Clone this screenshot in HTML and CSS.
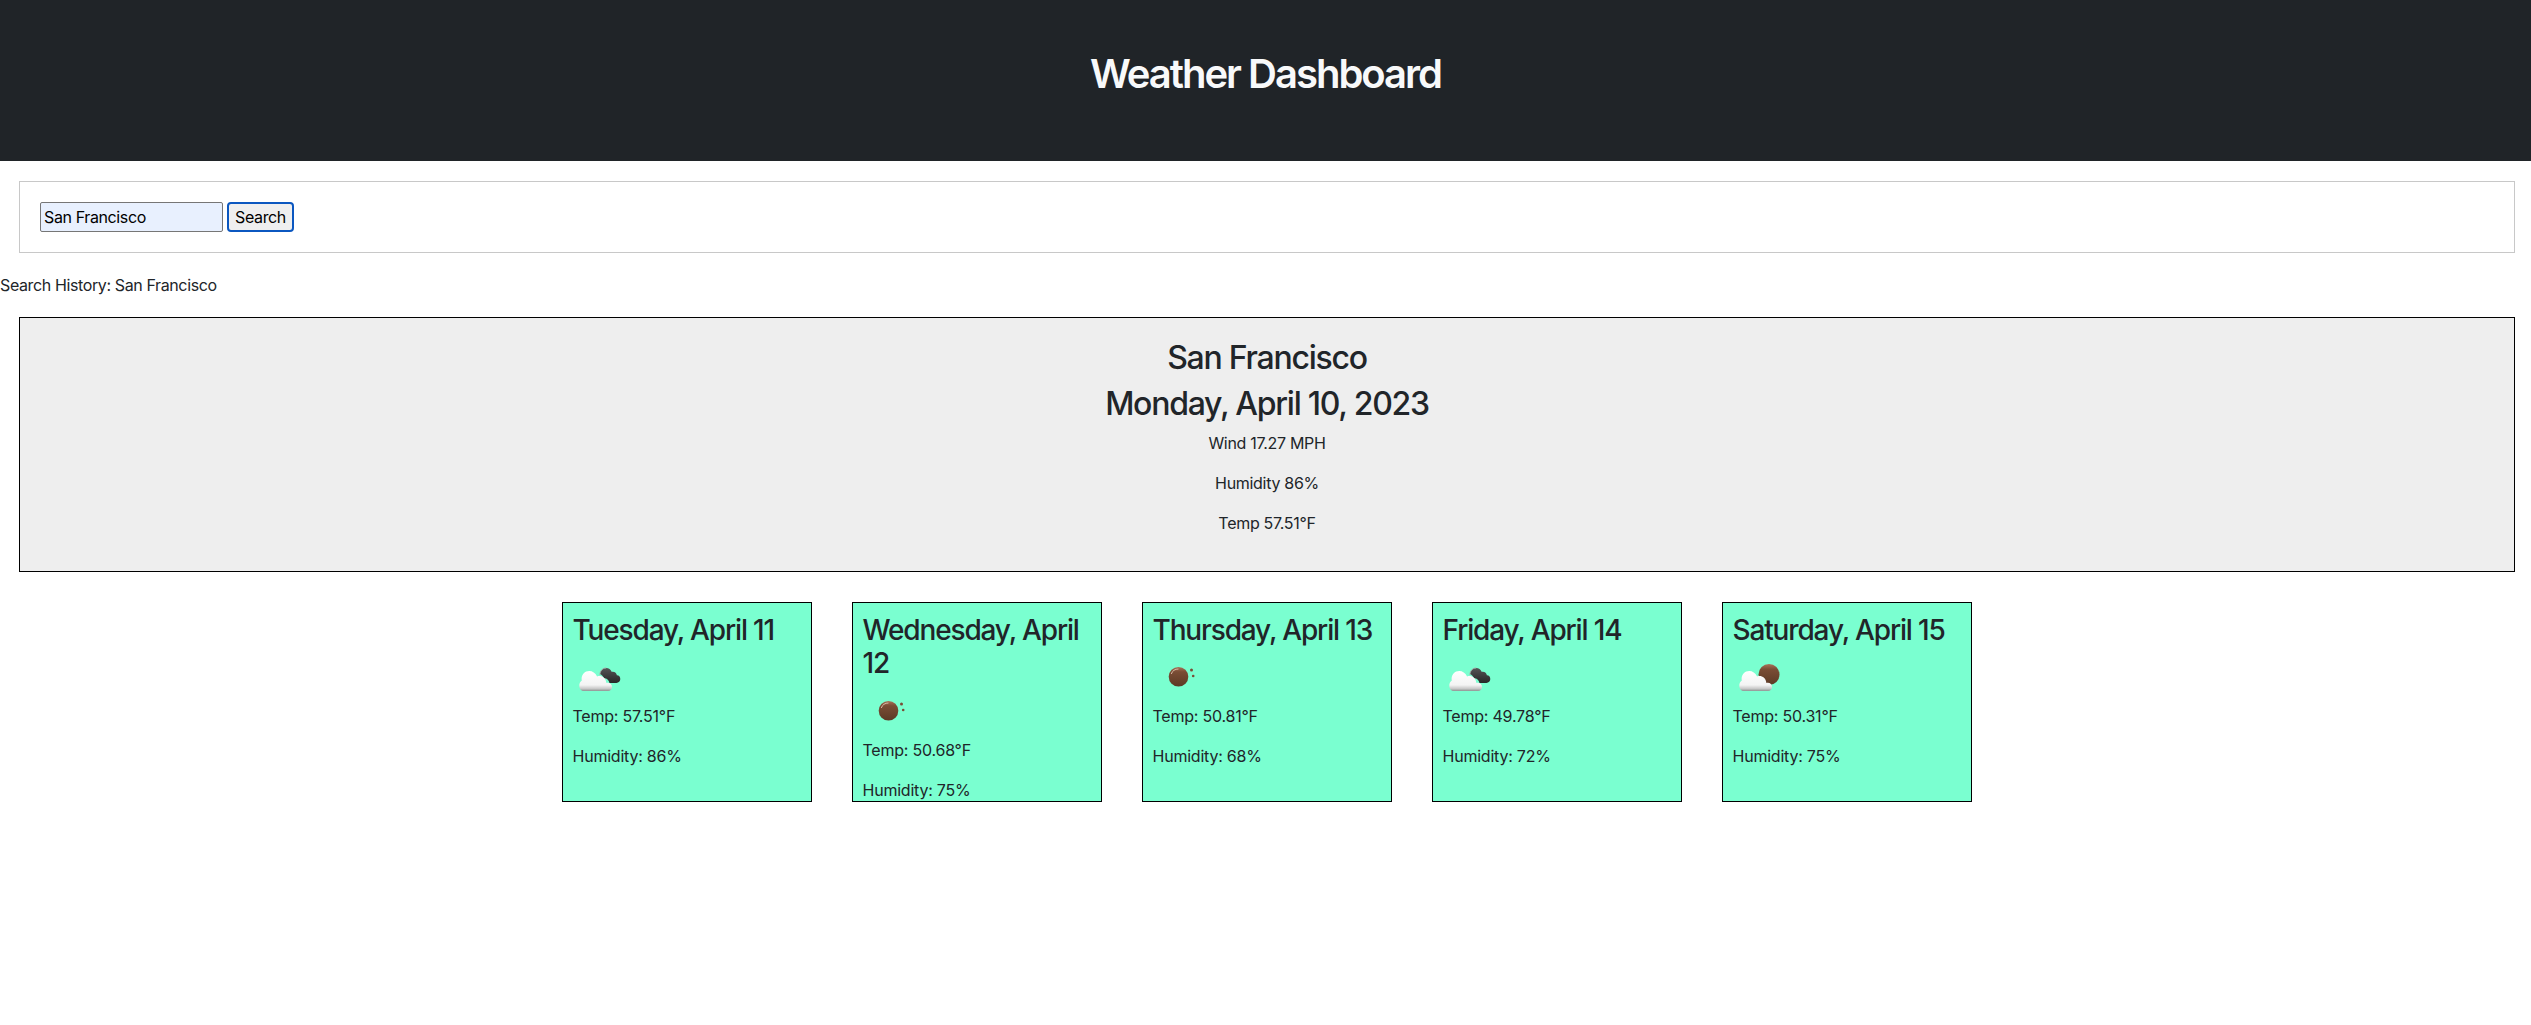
FILE: index.html
```html
<!DOCTYPE html>
<html lang="en">
  <head>
    <meta charset="UTF-8" />
    <meta name="viewport" content="width=device-width, initial-scale=1.0" />
    <title>Weather Dashboard</title>
    <link rel="stylesheet" href="styles.css">
  </head>
  <body>
    <svg class="icon-defs" aria-hidden="true">
      <defs>
        <linearGradient id="gradWhite" x1="0" y1="0" x2="0" y2="1">
          <stop offset="0" stop-color="#ffffff" />
          <stop offset="0.7" stop-color="#f4f4f4" />
          <stop offset="0.88" stop-color="#c9c9c9" />
          <stop offset="1" stop-color="#8f9492" />
        </linearGradient>
        <linearGradient id="gradDark" x1="0" y1="0" x2="0" y2="1">
          <stop offset="0" stop-color="#555555" />
          <stop offset="1" stop-color="#272727" />
        </linearGradient>
        <linearGradient id="gradBrown" x1="0" y1="0" x2="0" y2="1">
          <stop offset="0" stop-color="#a9745a" />
          <stop offset="0.25" stop-color="#7a4d35" />
          <stop offset="1" stop-color="#5c3a25" />
        </linearGradient>
        <symbol id="whiteCloud" viewBox="0 0 50 50">
          <path d="M10 37h24c2.600 0 4-1.800 4-4s-1.600-4.200-4.200-4.200c-.6 0-1 .1-1.400.2C32 24.600 28.800 22 25.400 22c-.8 0-1.600.1-2.300.4C21.400 19 18.400 17 15.300 17c-4.500 0-7.700 3.400-7.700 7.800 0 .6.1 1.200.2 1.600-1.500 1-2.500 2.800-2.500 5C5.300 34.800 7.300 37 10 37z" fill="url(#gradWhite)" />
        </symbol>
        <symbol id="darkCloud" viewBox="0 0 50 50">
          <path d="M26 21c-.2-3.500 2.200-7 6.200-7 2.600 0 4.600 1.500 5.400 3.800 3-.6 5 1.200 5.300 3.500 2-.1 3.400 1.600 3.400 3.800 0 2.300-1.600 3.900-3.900 3.900h-6.900c-.7-3-2.800-5-5.700-4.800-.6-1.900-1.900-3.400-3.800-4.200z" fill="url(#gradDark)" />
          <path d="M26 21c-.2-3.500 2.200-7 6.200-7" fill="none" stroke="#a8a8a8" stroke-width="1" />
        </symbol>
        <symbol id="stars" viewBox="0 0 50 50">
          <circle cx="37.500" cy="16" r="1.500" fill="#7a4d35" />
          <circle cx="39.200" cy="22" r="1.300" fill="#7a4d35" />
        </symbol>
      </defs>
    </svg>

    <header class="page-header">
      <h1>Weather Dashboard</h1>
    </header>

    <form class="search-form">
      <input class="search-input" type="text" value="San Francisco" />
      <button class="search-button" type="button">Search</button>
    </form>

    <p class="search-history">Search History: San Francisco</p>

    <section class="current-weather">
      <h2>San Francisco</h2>
      <h2>Monday, April 10, 2023</h2>
      <p>Wind 17.27 MPH</p>
      <p>Humidity 86%</p>
      <p>Temp 57.51°F</p>
    </section>

    <section class="forecast">
      <div class="card">
        <h3>Tuesday, April 11</h3>
        <svg class="weather-icon" viewBox="0 0 50 50">
          <use href="#darkCloud" />
          <use href="#whiteCloud" />
        </svg>
        <p>Temp: 57.51°F</p>
        <p>Humidity: 86%</p>
      </div>
      <div class="card">
        <h3>Wednesday, April 12</h3>
        <svg class="weather-icon" viewBox="0 0 50 50">
          <circle cx="24.500" cy="22.700" r="9.800" fill="url(#gradBrown)" />
          <path d="M17.300 20c1-3.300 3.800-5 7.200-5" fill="none" stroke="#d9b8a5" stroke-width="1" />
          <use href="#stars" />
        </svg>
        <p>Temp: 50.68°F</p>
        <p>Humidity: 75%</p>
      </div>
      <div class="card">
        <h3>Thursday, April 13</h3>
        <svg class="weather-icon" viewBox="0 0 50 50">
          <circle cx="24.500" cy="22.700" r="9.800" fill="url(#gradBrown)" />
          <path d="M17.300 20c1-3.300 3.800-5 7.200-5" fill="none" stroke="#d9b8a5" stroke-width="1" />
          <use href="#stars" />
        </svg>
        <p>Temp: 50.81°F</p>
        <p>Humidity: 68%</p>
      </div>
      <div class="card">
        <h3>Friday, April 14</h3>
        <svg class="weather-icon" viewBox="0 0 50 50">
          <use href="#darkCloud" />
          <use href="#whiteCloud" />
        </svg>
        <p>Temp: 49.78°F</p>
        <p>Humidity: 72%</p>
      </div>
      <div class="card">
        <h3>Saturday, April 15</h3>
        <svg class="weather-icon" viewBox="0 0 50 50">
          <circle cx="35" cy="20.500" r="10.500" fill="url(#gradBrown)" />
          <use href="#whiteCloud" />
        </svg>
        <p>Temp: 50.31°F</p>
        <p>Humidity: 75%</p>
      </div>
    </section>
  </body>
</html>
```

FILE: styles.css
```css
body {
  font-family: Inter, "Liberation Sans", sans-serif;
  font-size: 16px;
  line-height: 1.5;
  letter-spacing: -0.38px;
  margin: 0;
  background-color: #ffffff;
  color: #212529;
}
h1,
h2,
h3 {
  margin: 0 0 8px;
  font-weight: 500;
  line-height: 1.2;
}
h1 {
  font-size: 40px;
  font-weight: 600;
  letter-spacing: -2px;
  color: #f8f9fa;
}
h2 {
  font-size: 32px;
  letter-spacing: -1.25px;
}
h3 {
  font-size: 28px;
  letter-spacing: -1.15px;
}
p {
  margin: 0 0 16px;
}
.icon-defs {
  position: absolute;
  width: 0;
  height: 0;
}
.page-header {
  height: 161px;
  padding-top: 50px;
  box-sizing: border-box;
  text-align: center;
  background-color: #202428;
}
.search-form {
  display: flex;
  gap: 4px;
  margin: 20px 16px 20px 19px;
  padding: 20px;
  border: 1px solid #c8c8c8;
}
.search-input {
  width: 183px;
  height: 30px;
  padding: 1px 3px;
  box-sizing: border-box;
  font-family: inherit;
  font-size: 16px;
  letter-spacing: -0.38px;
  color: #000000;
  background-color: #e8f0fe;
  border: 1px solid #767676;
  border-radius: 2px;
}
.search-button {
  width: 67px;
  height: 30px;
  padding: 0;
  font-family: inherit;
  font-size: 16px;
  letter-spacing: -0.38px;
  color: #000000;
  background-color: #efefef;
  border: 2px solid #0b57c0;
  border-radius: 4px;
}
.search-history {
  margin: 0 0 20px;
}
.current-weather {
  margin: 20px 16px 20px 19px;
  padding: 21px 20px 20px;
  text-align: center;
  background-color: #eeeeee;
  border: 1px solid #000000;
}
.current-weather h2:last-of-type {
  margin-bottom: 7px;
}
.current-weather p {
  letter-spacing: -0.3px;
}
.forecast {
  display: flex;
  justify-content: center;
  gap: 40px;
  margin-top: 30px;
  padding-left: 2px;
}
.card {
  width: 250px;
  height: 200px;
  padding: 11px 10px 10px;
  box-sizing: border-box;
  background-color: #7affd0;
  border: 1px solid #000000;
}
.card h3 {
  margin-bottom: 7px;
}
.card p {
  letter-spacing: -0.22px;
}
.weather-icon {
  display: block;
  width: 50px;
  height: 50px;
  margin-left: 1px;
}
```
